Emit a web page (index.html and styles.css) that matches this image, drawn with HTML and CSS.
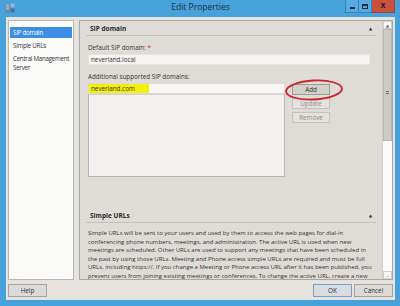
FILE: index.html
```html
<!DOCTYPE html>
<html>
<head>
<meta charset="utf-8">
<link rel="stylesheet" href="styles.css">
</head>
<body>
<div class="window">
  <div class="titlebar">
    <svg class="app-icon" width="10" height="10" viewBox="0 0 10 10">
      <rect x="0.5" y="0.5" width="4" height="9" fill="#6d7fa8"/>
      <rect x="5.5" y="0.5" width="4" height="4" fill="#9fb2d6"/>
      <rect x="5.5" y="5.5" width="4" height="4" fill="#54698f"/>
      <path d="M1 2h3M1 4h3M1 6h3" stroke="#dfe6f3" stroke-width="0.8"/>
    </svg>
    <div class="title">Edit Properties</div>
    <div class="controls">
      <div class="ctl ctl-min"><span class="bar"></span></div>
      <div class="ctl ctl-max"><span class="box"></span></div>
      <div class="ctl ctl-close">x</div>
    </div>
  </div>
  <div class="client">
    <div class="main">
      <ul class="nav">
        <li class="nav-item selected">SIP domain</li>
        <li class="nav-item">Simple URLs</li>
        <li class="nav-item">Central Management Server</li>
      </ul>
      <div class="panel">
        <div class="panel-body">
          <div class="section-head">
            <span class="section-title">SIP domain</span>
            <span class="collapse">&#9650;</span>
          </div>
          <div class="field-label">Default SIP domain: <span class="req">*</span></div>
          <div class="input">neverland.local</div>
          <div class="field-label second">Additional supported SIP domains:</div>
          <div class="domains">
            <div class="domain-list">
              <div class="input input-new"><span class="highlight">neverland.com</span></div>
              <div class="listbox"></div>
            </div>
            <div class="btn-col">
              <div class="btn btn-add">Add</div>
              <div class="btn disabled">Update</div>
              <div class="btn disabled">Remove</div>
              <svg class="circle" width="62" height="26" viewBox="0 0 62 26">
                <ellipse cx="31" cy="13" rx="28" ry="9.5" transform="rotate(-3 31 13)" fill="none" stroke="#c9252b" stroke-width="1.8"/>
              </svg>
            </div>
          </div>
          <div class="section-head second-head">
            <span class="section-title">Simple URLs</span>
            <span class="collapse">&#9650;</span>
          </div>
          <p class="desc">Simple URLs will be sent to your users and used by them to access the web pages for dial-in conferencing phone numbers, meetings, and administration. The active URL is used when new meetings are scheduled. Other URLs are used to support any meetings that have been scheduled in the past by using those URLs. Meeting and Phone access simple URLs are required and must be full URLs, including https://. If you change a Meeting or Phone access URL after it has been published, you prevent users from joining existing meetings or conferences. To change the active URL, create a new</p>
        </div>
        <div class="scrollbar">
          <div class="sb-btn">&#9650;</div>
          <div class="sb-thumb"><span class="grip"></span></div>
          <div class="sb-track"></div>
          <div class="sb-btn">&#8964;</div>
        </div>
      </div>
    </div>
    <div class="footer">
      <div class="btn fbtn">Help</div>
      <div class="footer-right">
        <div class="btn fbtn default">OK</div>
        <div class="btn fbtn">Cancel</div>
      </div>
    </div>
  </div>
</div>
</body>
</html>
```
FILE: styles.css
```css
* { box-sizing: border-box; }
html, body { margin: 0; padding: 0; }
body {
  width: 400px;
  height: 306px;
  overflow: hidden;
  font-family: "Open Sans", "DejaVu Sans", sans-serif;
  color: #2b2b2b;
}
.window {
  width: 400px;
  height: 306px;
  background: #47a2dc;
  display: flex;
  flex-direction: column;
  padding: 0 5px 6px 6px;
}
.titlebar {
  height: 17px;
  display: flex;
  align-items: center;
  position: relative;
  flex: none;
}
.app-icon { margin-left: -1px; margin-top: -2px; }
.title {
  position: absolute;
  left: 0; right: 0;
  top: 1px;
  text-align: center;
  font-size: 8.5px;
  color: #1f2f3d;
}
.controls {
  margin-left: auto;
  align-self: flex-start;
  display: flex;
  margin-right: 0;
}
.ctl {
  height: 13px;
  display: flex;
  align-items: center;
  justify-content: center;
  border: 1px solid #3682b8;
  border-top: none;
  background: #55abe2;
}
.ctl-min { width: 14px; }
.ctl-max { width: 13px; border-left: none; }
.ctl-close {
  width: 23px;
  background: #c8503f;
  border-color: #a9402f;
  border-left: none;
  color: #3a1a12;
  font-size: 8px;
  font-weight: bold;
  line-height: 1;
  padding-bottom: 2px;
}
.bar { width: 5px; height: 2px; background: #1d2b36; margin-top: 3px; }
.box { width: 6px; height: 5px; border: 1px solid #1d2b36; border-top-width: 2px; }
.client {
  flex: 1;
  background: #e6e3df;
  display: flex;
  flex-direction: column;
  padding: 3px 2px 0 2px;
}
.main {
  display: flex;
  gap: 5px;
  height: 260px;
}
.nav {
  list-style: none;
  margin: 0;
  padding: 6px 1px 0 1px;
  width: 66px;
  background: #fbfbfa;
  border: 1px solid #b9b7b3;
  font-size: 6.2px;
  line-height: 9px;
  letter-spacing: -0.25px;
}
.nav-item {
  padding: 1px 0 1px 3px;
  margin-bottom: 2px;
  color: #333;
}
.nav-item.selected {
  background: #3b8ee3;
  color: #fff;
  padding-top: 1px;
  padding-bottom: 1px;
}
.panel {
  flex: 1;
  display: flex;
  border: 1px solid #aaa8a4;
  background: #dfdcd8;
  overflow: hidden;
}
.panel-body {
  flex: 1;
  padding: 0 6px 0 8px;
  overflow: hidden;
  position: relative;
}
.section-head {
  display: flex;
  align-items: center;
  height: 15px;
  border-bottom: 1px solid #c4c1bc;
  margin-left: -2px;
  padding-left: 4px;
  padding-right: 4px;
}
.section-title {
  font-weight: bold;
  font-size: 6.5px;
  color: #2a2a2a;
}
.collapse {
  margin-left: auto;
  font-size: 4px;
  color: #222;
}
.field-label {
  font-size: 6.3px;
  line-height: 8px;
  margin-top: 8px;
  color: #333;
}
.field-label.second { margin-top: 8px; }
.req { color: #d2232a; }
.input {
  height: 11px;
  margin-top: 2px;
  background: #f6f5f3;
  border: 1px solid #e6e4e0;
  font-size: 6.3px;
  line-height: 9px;
  padding-left: 2px;
  color: #333;
  width: 282px;
}
.domains {
  display: flex;
  margin-top: 2px;
}
.domain-list { width: 197px; }
.input-new {
  width: 197px;
  margin-top: 0;
  padding-left: 0;
  background: #f8f7f5;
  border-color: #dcd9d5;
}
.highlight {
  display: inline-block;
  background: #f4f00a;
  padding-left: 2px;
  width: 60px;
  height: 9px;
}
.listbox {
  height: 83px;
  background: #f2f1ef;
  border: 1px solid #b9b6b1;
  border-top: 1px solid #d5d2ce;
}
.btn-col {
  position: relative;
  margin-left: 7px;
  margin-top: 1px;
  display: flex;
  flex-direction: column;
  gap: 3px;
}
.btn {
  width: 38px;
  height: 11px;
  border: 1px solid #b3b0ac;
  background: #e7e5e2;
  font-size: 6.3px;
  line-height: 9px;
  text-align: center;
  color: #333;
}
.btn-add {
  background: #d3d0cc;
  border-color: #9d9a96;
}
.btn.disabled {
  color: #8e8b87;
  background: #e4e2de;
  border-color: #c6c3bf;
}
.circle {
  position: absolute;
  left: -9px;
  top: -7px;
}
.second-head {
  margin-top: 31px;
}
.desc {
  margin: 6px 0 0 0;
  font-size: 6px;
  line-height: 8.5px;
  color: #333;
  width: 287px;
}
.scrollbar {
  width: 10px;
  display: flex;
  flex-direction: column;
  background: #f3f3f3;
  border-left: 1px solid #d0cecb;
}
.sb-btn {
  height: 8px;
  font-size: 4px;
  line-height: 8px;
  text-align: center;
  color: #555;
  background: #f7f7f7;
  border: 1px solid #cfcfcf;
}
.sb-thumb {
  height: 112px;
  background: #cdcbc8;
  border: 1px solid #b8b6b2;
  display: flex;
  align-items: center;
  justify-content: center;
  padding-top: 14px;
}
.grip {
  width: 3px;
  height: 3px;
  border-top: 1px solid #6f6d6a;
  border-bottom: 1px solid #6f6d6a;
}
.sb-track { flex: 1; background: #fbfbfb; }
.footer {
  flex: 1;
  display: flex;
  align-items: center;
  justify-content: space-between;
  padding: 0 0 0 0;
}
.footer-right { display: flex; gap: 2px; }
.fbtn {
  width: 39px;
  height: 13px;
  line-height: 11px;
  background: #dcdad6;
  border-color: #a8a5a1;
}
.fbtn.default { border-color: #7a9ec4; background: #d9dcde; }
```
